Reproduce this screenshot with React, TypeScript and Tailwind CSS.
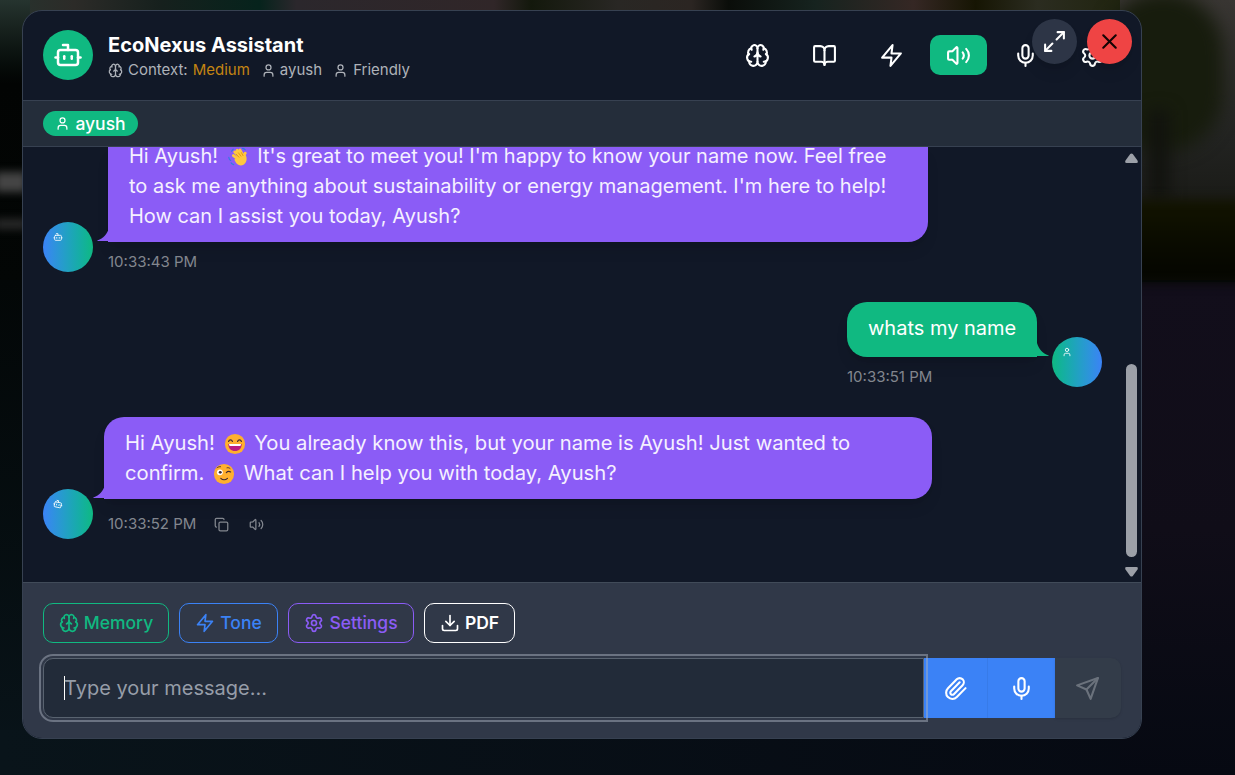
import React from "react";
import { Bot, Brain, BookOpen, Volume2, Mic, Settings, User, Maximize2, X, Copy, Download, Paperclip } from "lucide-react";
import { FiZap, FiSend } from "react-icons/fi";

function Wave() {
  return (
    <svg viewBox="0 0 24 24" className="-my-[4px] mx-[3px] inline-block h-[22px] w-[22px] align-[-1px]" fill="none" strokeLinecap="round">
      <g stroke="#ffc83d" strokeWidth="3.2">
        <path d="M14 12 8.5 6.5M15.5 11 11 4.8M17.5 10.5 14.2 4.5M12.5 14.5 7 10.5" />
        <path d="M18.5 12.5c-.3-2 .2-3.6 1.4-4.6" />
      </g>
      <path d="M10.5 12.5 17 8.5l3.5 1.5c2 4 .5 8.500-2.500 10.500-3 1.500-6 .5-8-2L8 15z" fill="#ffc83d" />
      <path d="m10 9 3 3.200M12.500 7.500l2.700 3.600M15.700 7.200l1.800 3.300" stroke="#d67d00" strokeWidth=".7" />
      <path d="M5 5.500 6.800 3.500M2 12.500c.2 1.500.8 2.500 2 3.300M4.500 18.500c.8 1 1.600 1.600 2.800 1.900M17 2.500c1.200.2 2.200.8 2.800 1.600" stroke="#2f7de1" strokeWidth="1.300" />
    </svg>
  );
}

function Grin() {
  return (
    <svg viewBox="0 0 24 24" className="mx-[3px] inline-block h-[22px] w-[22px] align-[-5px]" fill="none" strokeLinecap="round">
      <circle cx="12" cy="12" r="11" fill="#ffb02e" />
      <path d="M5 9.200c.8-2.200 3.400-2.200 4.200 0M14.800 9.200c.8-2.200 3.400-2.200 4.200 0" stroke="#402a32" strokeWidth="1.300" />
      <path d="M4.700 12h14.600c0 4.800-3 7.700-7.300 7.700S4.700 16.800 4.700 12z" fill="#bb1d80" />
      <path d="M5.500 12h13c0 1.500-.5 2.200-1.500 2.200H7c-1 0-1.500-.7-1.500-2.200z" fill="#fff" />
    </svg>
  );
}

function Wink() {
  return (
    <svg viewBox="0 0 24 24" className="mx-[3px] inline-block h-[22px] w-[22px] align-[-5px]" fill="none" strokeLinecap="round">
      <circle cx="12" cy="12" r="11" fill="#ffb02e" />
      <circle cx="7.500" cy="10.200" r="3.200" fill="#fff" />
      <circle cx="7.900" cy="10.200" r="1.600" fill="#402a32" />
      <path d="M4.500 5.200c1-.9 2.200-1.300 3.700-1.200M15.300 5.200c1.200-.3 2.400 0 3.300.8" stroke="#402a32" strokeWidth="1" />
      <path d="M14.500 10.500c1.300-1.500 3-1.800 4.800-.7M8.500 16.700c2 2 5.200 2 7.300 0" stroke="#402a32" strokeWidth="1.200" />
    </svg>
  );
}

function StartTail() {
  return (
    <svg viewBox="0 0 12 13" className="absolute bottom-[1px] -left-[11.500px] h-[13px] w-[12px]">
      <path d="M12 0v13H.8q-1-.3 0-.8C6 10.800 10.500 5.500 12 0z" fill="#8b5cf6" />
    </svg>
  );
}

function EndTail() {
  return (
    <svg viewBox="0 0 12 13" className="absolute -right-[11.500px] bottom-[1px] h-[13px] w-[12px]">
      <path d="M0 0v13h11.200q1-.3 0-.8C6 10.800 1.500 5.500 0 0z" fill="#10b981" />
    </svg>
  );
}

function BotAvatar({ tilted = false }: { tilted?: boolean }) {
  return (
    <div className="h-[50px] w-[50px] shrink-0 rounded-full bg-linear-to-r from-[#3b82f6] to-[#10b981] pt-[10px] pl-[10px] text-white">
      <Bot className={tilted ? "h-[10px] w-[10px] rotate-[12deg]" : "h-[10px] w-[10px]"} />
    </div>
  );
}

export default function App() {
  return (
    <div className="relative h-[775px] w-[1235px] overflow-hidden bg-[#050b10] pt-[10px] pl-[22px] font-['Inter',sans-serif]">
      <div className="absolute inset-x-0 top-0 h-[40px] bg-[linear-gradient(90deg,#26342f_0%,#2c2b28_6%,#16201d_13%,#06231c_21%,#2b272c_24%,#302628_40%,#13180c_43%,#292724_50%,#2b2522_56%,#0a0d09_59%,#16231f_66%,#352724_74%,#161503_79%,#2b2c20_84%,#20240f_91%,#393633_100%)]" />
      <div className="absolute top-0 left-0 h-[280px] w-[30px] bg-linear-to-b from-[#26342f] via-[#020403] via-30% to-[#030605]" />
      <div className="absolute top-[172px] -left-[5px] h-[20px] w-[32px] bg-[#454545] blur-[4px]" />
      <div className="absolute top-[219px] -left-[5px] h-[10px] w-[32px] bg-[#2b2b2b] blur-[4px]" />
      <div className="absolute top-[280px] left-0 h-[495px] w-[30px] bg-linear-to-b from-[#030707] to-[#09141a]" />
      <div className="absolute inset-x-0 bottom-0 h-[45px] bg-linear-to-r from-[#09141a] to-[#060912]" />
      <div className="absolute top-0 right-0 h-[280px] w-[115px] bg-linear-to-b from-[#393633] via-[#222321] to-[#11110b]" />
      <div className="absolute top-[-8px] right-[12px] h-[160px] w-[120px] rounded-full bg-[#171c0d] blur-[9px]" />
      <div className="absolute top-[110px] right-[66px] h-[90px] w-[20px] bg-[#11120e] blur-[8px]" />
      <div className="absolute top-[282px] right-0 h-[493px] w-[115px] bg-linear-to-b from-[#120e1b] via-[#100d18] to-[#060912]" />
      <div className="absolute top-[200px] right-[-10px] h-[82px] w-[125px] bg-linear-to-b from-[#131400] to-[#040500] blur-[6px]" />

      <div className="relative flex h-[729px] w-[1120px] flex-col overflow-hidden rounded-[20px] border border-[#374151] bg-[#111827]">
        <header className="flex h-[90px] shrink-0 items-center border-b border-[#374151] px-[20px] pb-[1px]">
          <div className="flex h-[50px] w-[50px] items-center justify-center rounded-full bg-[#10b981] text-white">
            <Bot size={30} />
          </div>
          <div className="ml-[15px] pt-[5px]">
            <h1 className="text-[20px] leading-[25px] font-bold whitespace-nowrap text-white">EcoNexus Assistant</h1>
            <div className="flex h-[25px] items-center text-[15px] whitespace-nowrap text-[#aeb2b9]">
              <Brain size={15} />
              <span className="ml-[5px]">Context:</span>
              <span className="ml-[5px] text-[#c48412]">Medium</span>
              <User className="ml-[11px]" size={15} />
              <span className="ml-[4px]">ayush</span>
              <User className="ml-[11px]" size={15} />
              <span className="ml-[5px]">Friendly</span>
            </div>
          </div>
          <nav className="ml-auto flex gap-[10px] text-white">
            <div className="flex h-[40px] w-[57px] items-center justify-center"><Brain size={25} /></div>
            <div className="flex h-[40px] w-[57px] items-center justify-center"><BookOpen size={25} /></div>
            <div className="flex h-[40px] w-[57px] items-center justify-center"><FiZap size={25} /></div>
            <div className="flex h-[40px] w-[57px] items-center justify-center rounded-[10px] bg-[#10b981]"><Volume2 size={25} /></div>
            <div className="flex h-[40px] w-[57px] items-center justify-center"><Mic size={25} /></div>
            <div className="flex h-[40px] w-[57px] items-center justify-center"><Settings size={25} /></div>
          </nav>
        </header>

        <div className="flex h-[46px] shrink-0 items-center border-b border-[#374151] bg-[#242d3a] px-[20px]">
          <div className="flex h-[25px] w-[95px] items-center justify-center gap-[5px] rounded-full bg-[#10b981] text-[17.500px] leading-[24px] font-medium text-white">
            <User size={15} />
            <span className="pt-[1px]">ayush</span>
          </div>
        </div>

        <div className="flex h-[435px] shrink-0 overflow-hidden">
          <div className="flex w-[1103px] flex-col pl-[20px]">
            <div className="flex h-[125px] shrink-0 items-end gap-[15px]">
              <BotAvatar />
              <div className="flex h-[125px] flex-col">
                <div className="relative h-[95px] w-[820px] shrink-0 rounded-br-[20px] bg-[#8b5cf6] pl-[21px] shadow-lg">
                  <StartTail />
                  <div className="text-[20px] leading-[30px] whitespace-nowrap text-[#f5f0ff]">
                    <p className="h-[24px] leading-[18px]">Hi Ayush! <Wave /> It's great to meet you! I'm happy to know your name now. Feel free</p>
                    <p>to ask me anything about sustainability or energy management. I'm here to help!</p>
                    <p>How can I assist you today, Ayush?</p>
                  </div>
                </div>
                <time className="pt-[9px] text-[15px] leading-[22px] text-[#83878f]">10:33:43 PM</time>
              </div>
            </div>

            <div className="mt-[30px] flex h-[85px] shrink-0 items-end justify-end gap-[15px] pr-[24px]">
              <div className="flex h-[85px] w-[190px] flex-col">
                <div className="relative h-[55px] w-[190px] shrink-0 rounded-[20px] rounded-br-none bg-[#10b981] pt-[11px] pl-[21px] text-[20px] leading-[30px] whitespace-nowrap text-white shadow-lg">
                  whats my name
                  <EndTail />
                </div>
                <time className="pt-[9px] text-[15px] leading-[22px] text-[#83878f]">10:33:51 PM</time>
              </div>
              <div className="h-[50px] w-[50px] shrink-0 rounded-full bg-linear-to-r from-[#10b981] to-[#3b82f6] pt-[10px] pl-[10px] text-white">
                <User size={10} />
              </div>
            </div>

            <div className="mt-[30px] flex h-[122px] shrink-0 items-end gap-[11px]">
              <BotAvatar tilted />
              <div className="flex h-[122px] flex-col">
                <div className="relative h-[82px] w-[828px] shrink-0 rounded-[20px] rounded-bl-none bg-[#8b5cf6] pt-[11px] pl-[21px] shadow-lg">
                  <StartTail />
                  <div className="text-[20.200px] leading-[30px] whitespace-nowrap text-[#f5f0ff]">
                    <p>Hi Ayush! <Grin /> You already know this, but your name is Ayush! Just wanted to</p>
                    <p>confirm. <Wink /> What can I help you with today, Ayush?</p>
                  </div>
                </div>
                <div className="mt-[14px] ml-[4px] flex items-center text-[15px] leading-[22px] text-[#83878f]">
                  <time>10:33:52 PM</time>
                  <Copy size={15} className="ml-[18px]" />
                  <Volume2 size={15} className="ml-[20px]" />
                </div>
              </div>
            </div>
          </div>
          <div className="flex w-[11px] flex-col items-center pt-[6px]">
            <svg className="h-[10px] w-[13px] shrink-0" viewBox="0 0 13 10"><path d="M5.200 1q1.300-1.200 2.600 0l4.700 6.500q1 2.500-1 2.500h-10q-2 0-1-2.500z" fill="#9ca0a8" /></svg>
            <div className="mt-[201px] h-[193px] w-[11px] shrink-0 rounded-full bg-[#9ca0a8]" />
            <svg className="mt-[10px] h-[10px] w-[13px] shrink-0" viewBox="0 0 13 10"><path d="M5.200 9q1.300 1.200 2.600 0l4.700-6.500q1-2.500-1-2.500h-10q-2 0-1 2.500z" fill="#9ca0a8" /></svg>
          </div>
        </div>

        <footer className="flex h-[156px] shrink-0 flex-col border-t border-[#414b59] bg-[#303848] px-[20px] pt-[20px]">
          <div className="flex gap-[10px] text-[17.500px] font-medium">
            <div className="flex h-[40px] w-[126px] items-center justify-center gap-[5px] rounded-[10px] border border-[#10b981] text-[#10b981]"><Brain size={20} /><span>Memory</span></div>
            <div className="flex h-[40px] w-[99px] items-center justify-center gap-[5px] rounded-[10px] border border-[#3b82f6] text-[#3b82f6]"><FiZap size={20} /><span>Tone</span></div>
            <div className="flex h-[40px] w-[126px] items-center justify-center gap-[5px] rounded-[10px] border border-[#8b5cf6] text-[#8b5cf6]"><Settings size={20} /><span>Settings</span></div>
            <div className="flex h-[40px] w-[91px] items-center justify-center gap-[5px] rounded-[10px] border border-white font-semibold text-white"><Download size={20} /><span>PDF</span></div>
          </div>
          <div className="mt-[15px] flex h-[60px]">
            <div className="relative z-10 flex h-[60px] w-[881px] items-center rounded-l-[10px] border border-[#596370] bg-[#222b39] pl-[20px] text-[20px] text-[#969da8] outline-2 outline-offset-2 outline-[#a6adbb80]">
              <span className="h-[24px] w-px bg-white" />
              <span className="-ml-px">Type your message...</span>
            </div>
            <div className="flex w-[63px] items-center justify-center bg-[#3b82f6] text-white"><Paperclip size={25} /></div>
            <div className="flex w-[68px] items-center justify-center border-l border-[#377be9] bg-[#3b82f6] pr-[1px] text-white"><Mic size={25} /></div>
            <div className="flex w-[66px] items-center justify-center rounded-r-[10px] bg-[#333c49] pr-[1px] text-[#6b727c] shadow-sm"><FiSend size={25} /></div>
          </div>
        </footer>
      </div>
      <div className="absolute top-[19px] left-[1032px] flex h-[45px] w-[45px] items-center justify-center rounded-full bg-[#2d3546] text-white shadow-lg"><Maximize2 size={25} /></div>
      <div className="absolute top-[19px] left-[1087px] flex h-[45px] w-[45px] items-center justify-center rounded-full bg-[#ef4444] text-[#140404] shadow-lg"><X size={25} /></div>
    </div>
  );
}
